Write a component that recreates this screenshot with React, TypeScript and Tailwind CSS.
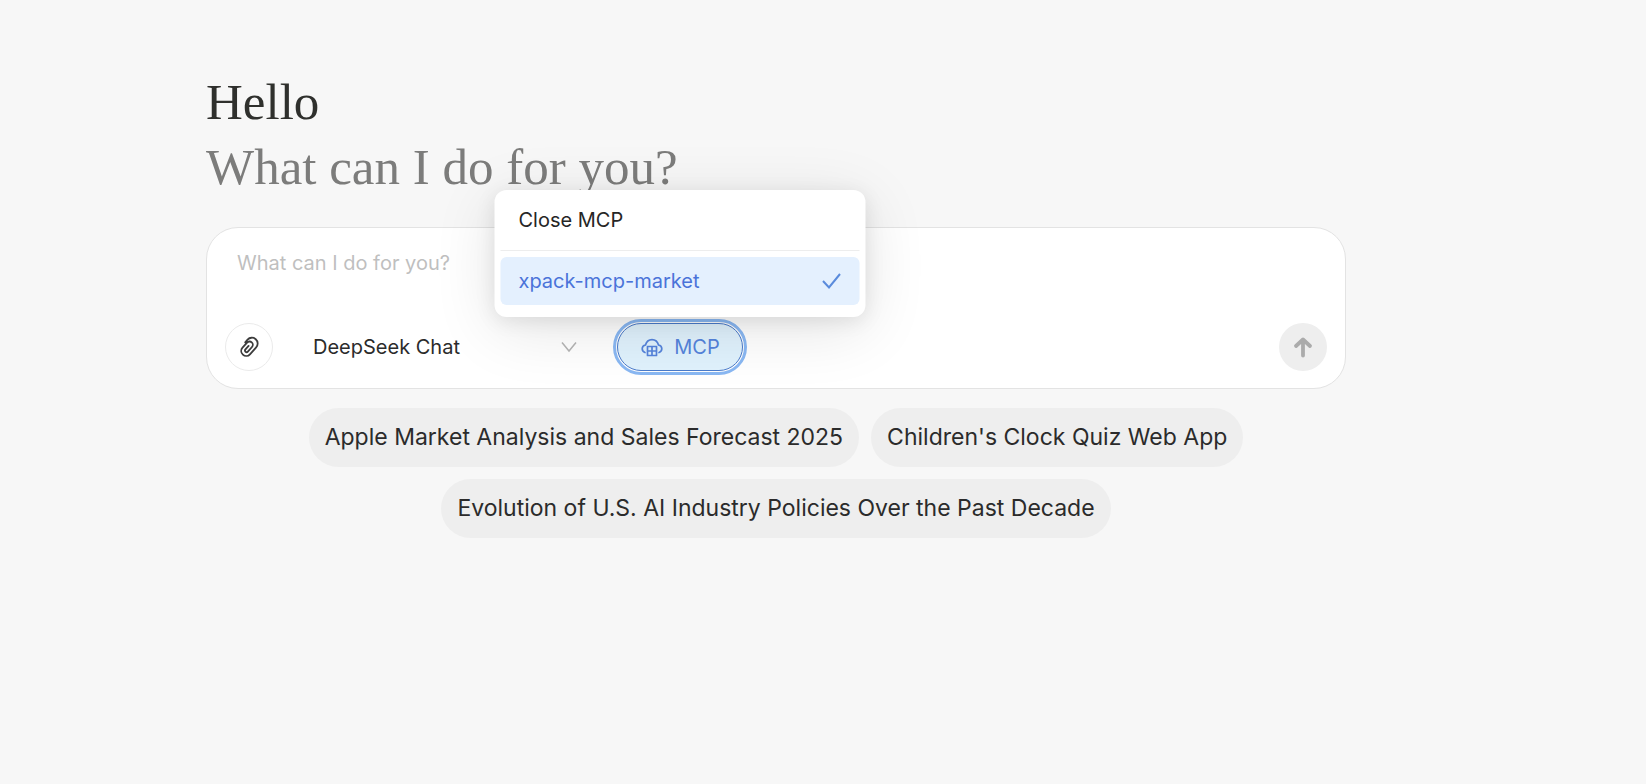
const prompts = [
  "Apple Market Analysis and Sales Forecast 2025",
  "Children's Clock Quiz Web App",
  "Evolution of U.S. AI Industry Policies Over the Past Decade",
];

function PaperclipIcon() {
  return (
    <svg viewBox="0 0 24 24" className="size-6 text-[#3c3c3c]" fill="none" stroke="currentColor" strokeWidth="1.800" strokeLinecap="round" strokeLinejoin="round" aria-hidden="true">
      <g transform="rotate(42 12 12)">
        <path d="M6 11V7.500a5.800 5.800 0 0 1 11.600 0v9.300a5 5 0 0 1-10 0V10a3.300 3.300 0 0 1 6.600 0v6.200a1.600 1.600 0 0 1-3.200 0V11.500" />
      </g>
    </svg>
  );
}

function CloudServerIcon() {
  return (
    <svg viewBox="0 0 24 24" className="size-6" fill="none" stroke="currentColor" strokeWidth="1.7" strokeLinecap="round" strokeLinejoin="round" aria-hidden="true">
      <path d="M5 17.500C3.300 16.900 2.200 15.600 2.200 13.800c0-2 1.300-3.400 3.300-3.800C6.300 6.900 8.800 4.600 12 4.600s5.700 2.300 6.500 5.400c2 .4 3.300 1.800 3.300 3.800 0 1.800-1.100 3.100-2.800 3.700" />
      <path d="M7.500 11.500h9v9h-9zM7.500 16h9M12 11.500v9" />
    </svg>
  );
}

function CheckIcon() {
  return (
    <svg viewBox="0 0 20 20" className="size-5 text-[#5a8bdc]" fill="none" stroke="currentColor" strokeWidth="2" aria-hidden="true">
      <path d="M1.500 10 7.500 16.500 18.500 3" />
    </svg>
  );
}

function ChevronIcon() {
  return (
    <svg viewBox="0 0 16 16" className="pointer-events-none absolute right-4 size-4" fill="none" stroke="currentColor" strokeWidth="1.500" aria-hidden="true">
      <path d="M1 3.500 8 12 15 3.500" />
    </svg>
  );
}

function ArrowUpIcon() {
  return (
    <svg viewBox="0 0 24 24" className="size-6" fill="none" stroke="currentColor" strokeWidth="3.800" strokeLinecap="round" strokeLinejoin="round" aria-hidden="true">
      <path d="M12 20.500V5M5 11l7-6.500 7 6.500" />
    </svg>
  );
}

function McpMenu() {
  return (
    <div role="menu" className="absolute bottom-full left-1/2 z-10 mb-1.5 w-[371px] -translate-x-1/2 rounded-xl bg-white px-1.5 pb-3 pt-1.5 shadow-[0_12px_64px_rgba(0,0,0,0.11),0_4px_20px_rgba(0,0,0,0.09)]">
      <button role="menuitem" className="flex h-12 w-full items-center px-[18px] text-left text-xl text-[#262626]">
        Close MCP
      </button>
      <div className="my-1.5 h-px bg-[#ededed]" />
      <button role="menuitem" className="flex h-12 w-full items-center justify-between rounded-md bg-[#e4f0fe] px-[18px] text-left text-xl text-[#4a73d9]">
        xpack-mcp-market
        <CheckIcon />
      </button>
    </div>
  );
}

export default function App() {
  return (
    <main className="min-h-screen bg-[#f7f7f7] pl-[206px] pr-[300px] pt-[70px] font-[Inter,sans-serif] text-[#2b2b2b]">
      <h1 className="font-['Liberation_Serif',serif] text-[51px] leading-[65px] text-[#2f302d]">
        Hello
        <span className="block text-[#7c7c7b]">What can I do for you?</span>
      </h1>

      <form className="mt-[27px] rounded-[32px] border border-[#e3e3e3] bg-white px-[18px] pb-[17px] pt-[19px]" onSubmit={(e) => e.preventDefault()}>
        <textarea
          aria-label="Message"
          placeholder="What can I do for you?"
          className="block h-[76px] w-full resize-none px-3 text-xl leading-8 outline-none placeholder:text-[#bfbfbf]"
        />
        <div className="flex items-center">
          <button type="button" aria-label="Attach file" className="flex size-12 items-center justify-center rounded-full border border-[#ebebeb]">
            <PaperclipIcon />
          </button>
          <div className="relative ml-6 flex w-[296px] items-center text-[#b5b5b5]">
            <select aria-label="Model" className="h-12 w-full appearance-none bg-transparent px-4 text-xl text-[#2b2b2b] outline-none">
              <option>DeepSeek Chat</option>
            </select>
            <ChevronIcon />
          </div>
          <div className="relative ml-6">
            <button type="button" aria-haspopup="menu" className="flex h-12 w-[126px] items-center justify-center gap-2.5 rounded-full border border-[#4a7bcb] bg-[#e0f2fd] text-xl text-[#5584dc] outline-3 outline-offset-1 outline-[#8ab8f3]">
              <CloudServerIcon />
              MCP
            </button>
            <McpMenu />
          </div>
          <button type="submit" aria-label="Send" className="ml-auto flex size-12 items-center justify-center rounded-full bg-[#eeeeee] text-[#ababab]">
            <ArrowUpIcon />
          </button>
        </div>
      </form>

      <div className="mt-[19px] flex flex-wrap justify-center gap-3">
        {prompts.map((prompt) => (
          <button key={prompt} className="h-[59px] rounded-full bg-[#eeeeee] px-4 text-[23px]">
            {prompt}
          </button>
        ))}
      </div>
    </main>
  );
}
